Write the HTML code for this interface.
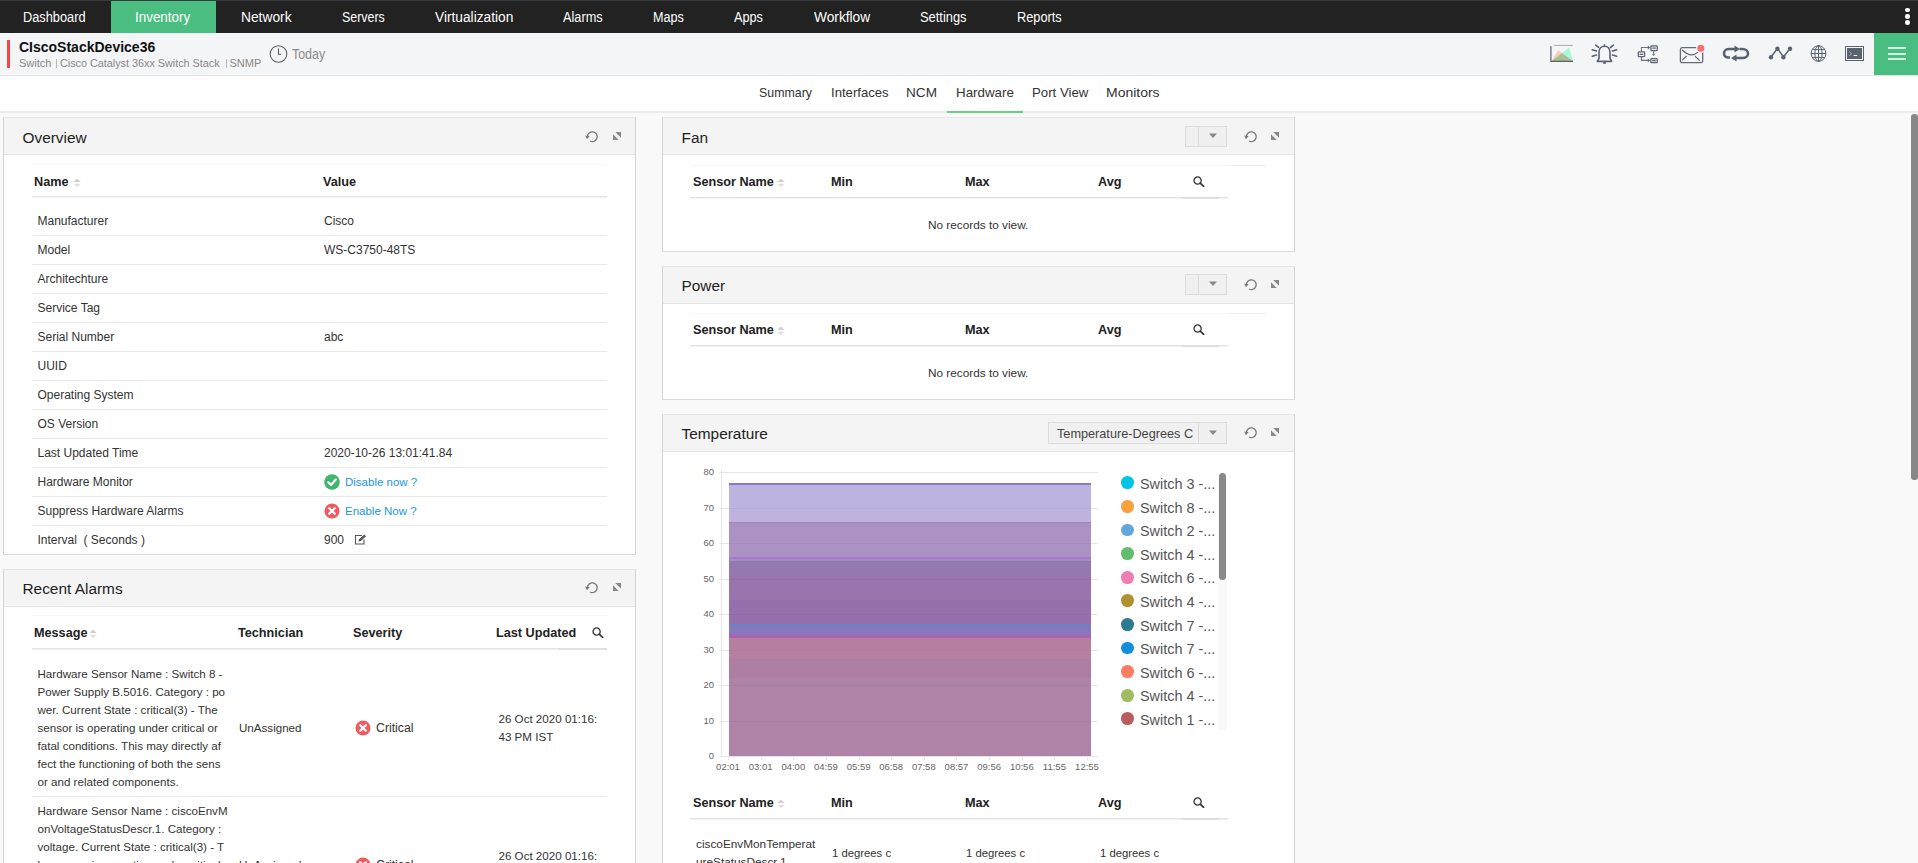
<!DOCTYPE html>
<html><head><meta charset="utf-8">
<style>
html,body{margin:0;padding:0}
body{width:1918px;height:863px;overflow:hidden;position:relative;background:#f9f9f9;font-family:"Liberation Sans",sans-serif;color:#333}
.a{position:absolute;white-space:nowrap}
.nav{position:absolute;left:0;top:0;width:1918px;height:33px;background:#222}
.nt{position:absolute;top:9px;font-size:14px;line-height:17px;color:#fff;white-space:nowrap;transform-origin:0 0}
.sub{position:absolute;left:0;top:33px;width:1918px;height:42px;background:#f4f5f7;border-bottom:1px solid #e2e3e5}
.tabs{position:absolute;left:0;top:76px;width:1918px;height:35px;background:#fff;border-bottom:2px solid #ececec}
.tt{position:absolute;top:85px;font-size:13.6px;line-height:16px;color:#333;white-space:nowrap;transform-origin:0 0}
.panel{position:absolute;background:#fff;border:1px solid #d4d4d4;border-top-color:#e6e6e6;border-bottom-color:#dcdcdc;box-sizing:border-box}
.ph{position:absolute;left:0;top:0;right:0;height:37px;background:#f4f4f4;border-bottom:1px solid #e4e4e4}
.ptitle{position:absolute;font-size:15.4px;line-height:17px;color:#1e1e1e;white-space:nowrap}
.th{position:absolute;font-size:13.4px;font-weight:bold;line-height:15px;color:#222;white-space:nowrap;transform:scaleX(0.945);transform-origin:0 0}
.td{position:absolute;font-size:12px;line-height:14px;color:#333}
.hl{position:absolute;height:1px;background:#ebebeb}
.fl{position:absolute;height:1px;background:#f6f6f6}
</style></head><body>
<!-- top nav -->
<div class="nav"></div>
<div class="a" style="left:0;top:0;width:1918px;height:1px;background:#393a3e"></div>
<div class="a" style="left:111px;top:1px;width:105px;height:32px;background:#4abd80"></div>
<div class="nt" style="left:23.25px;transform:scaleX(0.9136)">Dashboard</div>
<div class="nt" style="left:135.04px;transform:scaleX(0.9579)">Inventory</div>
<div class="nt" style="left:240.51px;transform:scaleX(0.9843)">Network</div>
<div class="nt" style="left:342.00px;transform:scaleX(0.8875)">Servers</div>
<div class="nt" style="left:435.00px;transform:scaleX(0.9798)">Virtualization</div>
<div class="nt" style="left:563.00px;transform:scaleX(0.9091)">Alarms</div>
<div class="nt" style="left:653.25px;transform:scaleX(0.9005)">Maps</div>
<div class="nt" style="left:733.87px;transform:scaleX(0.9062)">Apps</div>
<div class="nt" style="left:813.79px;transform:scaleX(0.9793)">Workflow</div>
<div class="nt" style="left:919.95px;transform:scaleX(0.9201)">Settings</div>
<div class="nt" style="left:1016.95px;transform:scaleX(0.9130)">Reports</div>
<!-- /nav -->

<!-- sub header -->
<div class="sub"></div>
<div class="a" style="left:7px;top:40px;width:3px;height:28px;background:#f4464b"></div>
<div class="a" style="left:19px;top:39px;font-size:14px;font-weight:bold;line-height:17px;color:#111">CIscoStackDevice36</div>
<div class="a" style="left:19px;top:57px;font-size:11px;line-height:12px;color:#888">Switch</div>
<div class="a" style="left:55.5px;top:58.5px;width:1px;height:9.5px;background:#b5b8c0"></div>
<div class="a" style="left:60px;top:57px;font-size:10.8px;line-height:12px;color:#888">Cisco Catalyst 36xx Switch Stack</div>
<div class="a" style="left:225.5px;top:58.5px;width:1px;height:9.5px;background:#b5b8c0"></div>
<div class="a" style="left:229.5px;top:57px;font-size:11px;line-height:12px;color:#888">SNMP</div>
<svg class="a" style="left:268px;top:44px" width="21" height="21" viewBox="0 0 21 21"><circle cx="10.5" cy="10" r="8.3" fill="none" stroke="#5c5c5c" stroke-width="1.05"/><path d="M10.5 4.6v5.6h2.6" fill="none" stroke="#555" stroke-width="1.05"/></svg>
<div class="a" style="left:292px;top:47px;font-size:13.8px;line-height:15px;color:#8a8a8a;transform:scaleX(0.9);transform-origin:0 0">Today</div>
<!-- icons -->
<svg class="a" style="left:1548px;top:43px" width="28" height="21" viewBox="0 0 28 21">
<path d="M6 2.4H25" stroke="#a0a4aa" stroke-width="0.9"/>
<path d="M3.7 18L10.3 7.2L25 18Z" fill="#ffc8b0"/>
<path d="M3.7 18L21.2 4.5L25 18Z" fill="#aaf6d8"/>
<path d="M3.7 18L14.1 10.3L25 18Z" fill="#a9bf92"/>
<path d="M2.9 3.3V18.4H25" fill="none" stroke="#5a6270" stroke-width="1.2"/>
</svg>
<svg class="a" style="left:1590px;top:43px" width="29" height="22" viewBox="0 0 29 22">
<path d="M9 15.4V9.2C9 5.6 11.4 3.2 14.5 3.2C17.6 3.2 20 5.6 20 9.2V15.4L21.7 18.4H7.3Z" fill="none" stroke="#5a6270" stroke-width="1.6" stroke-linejoin="round"/>
<path d="M14.5 1.3V3.5" stroke="#5a6270" stroke-width="1.5"/>
<path d="M13.2 19.1h2.7v1.7h-2.7z" fill="#5a6270"/>
<path d="M5.7 2.2L8.6 4.3M23.4 2.2L20.5 4.5M2.3 6.8L6.5 8M26.7 6.8L22.5 8M2.3 13.3L6.5 12M26.7 13.3L22.5 12" stroke="#5a6270" stroke-width="1.6" stroke-linecap="round"/>
</svg>
<svg class="a" style="left:1636px;top:44px" width="24" height="20" viewBox="0 0 24 20">
<g fill="none" stroke="#5a6270" stroke-width="1.25">
<rect x="14.9" y="1.9" width="6.3" height="4.6" rx="0.6"/><rect x="2.3" y="7.9" width="6.3" height="4.7" rx="0.6"/><rect x="14.9" y="14.5" width="6.3" height="4.2" rx="0.6"/>
<path d="M16.3 4.2H19.8M3.7 10.3H7.2M16.3 16.6H19.8"/>
<path d="M5.4 7.8V3.5H12.2M5.4 12.7V16.4H12.2M17.6 7.2V10.6" stroke="#6a7280" stroke-width="1.1"/>
</g>
<path d="M11.8 1.6L14.2 3.5L11.8 5.4ZM11.8 14.5L14.2 16.4L11.8 18.3ZM16 10.2H19.2L17.6 12Z" fill="#5a6270"/>
</svg>
<svg class="a" style="left:1678px;top:44px" width="30" height="21" viewBox="0 0 30 21">
<rect x="2.4" y="3.7" width="22.3" height="15" rx="1.8" fill="none" stroke="#646c78" stroke-width="1.3"/>
<path d="M4 5.8Q13.2 14.8 19.9 8.1M4 16.4L8.6 12M17 12.2L21.8 16.6" fill="none" stroke="#646c78" stroke-width="1.2"/>
<circle cx="22.8" cy="4.3" r="4.8" fill="#f4f5f7"/><circle cx="22.8" cy="4.3" r="3.5" fill="#f47272"/>
</svg>
<svg class="a" style="left:1721px;top:44px" width="30" height="18" viewBox="0 0 30 18">
<path d="M9 13.5H7.5C4.5 13.5 3 11.5 3 9.5S4.5 5 7.5 5H15M18.5 5H21.5C24.5 5 27 7 27 9.5S24.5 14 21.5 14H14" fill="none" stroke="#5a6270" stroke-width="2.6"/>
<path d="M13.5 1.5L19 5L13.5 8.5Z M15.5 10.5L10 14L15.5 17.5Z" fill="#5a6270"/>
</svg>
<svg class="a" style="left:1767px;top:44px" width="27" height="18" viewBox="0 0 27 18">
<path d="M4 13L10.5 4.5L16.5 13L23 4.5" fill="none" stroke="#5a6270" stroke-width="1.5"/>
<circle cx="4" cy="13.2" r="2.2" fill="#5a6270"/><circle cx="10.4" cy="4.7" r="2.2" fill="#5a6270"/><circle cx="16.4" cy="13.2" r="2.2" fill="#5a6270"/><circle cx="23" cy="4.7" r="2.2" fill="#5a6270"/>
</svg>
<svg class="a" style="left:1809px;top:44px" width="19" height="19" viewBox="0 0 19 19">
<g fill="none" stroke="#5a6270" stroke-width="1">
<ellipse cx="9.5" cy="9.5" rx="7.4" ry="7.8"/><ellipse cx="9.5" cy="9.5" rx="3.6" ry="7.8"/><path d="M9.5 1.7V17.3M2.1 9.5H16.9M3.2 5.6H15.8M3.2 13.4H15.8"/>
</g></svg>
<svg class="a" style="left:1844px;top:45px" width="22" height="17" viewBox="0 0 22 17">
<rect x="1.5" y="1.5" width="18" height="14" fill="none" stroke="#5a6270" stroke-width="1"/>
<rect x="3" y="3" width="15" height="11" fill="#5a6270"/>
<path d="M5.3 6.8L7.6 8.8L5.3 10.8" fill="none" stroke="#aab0ba" stroke-width="1"/><path d="M9.6 10.5H13.2" stroke="#e8eaee" stroke-width="1"/>
</svg>
<div class="a" style="left:1874px;top:33px;width:44px;height:42px;background:#4abd80"></div>
<div class="a" style="left:1888px;top:47px;width:18px;height:2px;background:#d7f1e1"></div>
<div class="a" style="left:1888px;top:53px;width:18px;height:2px;background:#d7f1e1"></div>
<div class="a" style="left:1888px;top:58px;width:18px;height:2px;background:#d7f1e1"></div>
<div class="a" style="left:1905px;top:7.8px;width:4.6px;height:4.6px;border-radius:50%;background:#fff"></div>
<div class="a" style="left:1905px;top:14px;width:4.6px;height:4.6px;border-radius:50%;background:#fff"></div>
<div class="a" style="left:1905px;top:20.2px;width:4.6px;height:4.6px;border-radius:50%;background:#fff"></div>
<div class="tabs"></div>
<div class="tt" style="left:758.83px;transform:scaleX(0.9105)">Summary</div>
<div class="tt" style="left:830.51px;transform:scaleX(0.9662)">Interfaces</div>
<div class="tt" style="left:906.49px;transform:scaleX(1.0003)">NCM</div>
<div class="tt" style="left:955.50px;transform:scaleX(0.9828)">Hardware</div>
<div class="tt" style="left:1031.81px;transform:scaleX(0.9726)">Port View</div>
<div class="tt" style="left:1105.88px;transform:scaleX(1.0275)">Monitors</div>
<!-- /tabs -->
<div class="a" style="left:947px;top:111px;width:76px;height:2px;background:#68d080"></div>

<!-- panels -->
<div class="panel" style="left:3px;top:117px;width:633px;height:438px"><div class="ph" style="height:36px"></div></div>
<div class="ptitle" style="left:22.5px;top:129px">Overview</div>
<svg class="a" style="left:584.5px;top:128.6px" width="14" height="14" viewBox="0 0 14 14"><path d="M2.4 7.6A4.9 4.9 0 1 1 5 12" fill="none" stroke="#777" stroke-width="1.25"/><path d="M0.2 6.6L4.6 6.9L2 10.2Z" fill="#777"/></svg>
<svg class="a" style="left:613px;top:132px" width="8" height="8" viewBox="0 0 8 8"><path d="M2.3 0H8V5.7Z" fill="#878787"/><path d="M0 2.3V8H5.7Z" fill="#878787"/></svg>
<div class="a" style="left:32px;top:164px;width:575px;height:1px;background:#f7f7f7"></div>
<div class="th" style="left:34px;top:174px">Name</div>
<svg class="a" style="left:73px;top:177.5px" width="8" height="10" viewBox="0 0 8 10"><path d="M0.5 4H7.5L4 0.5Z" fill="#cfcfcf"/><path d="M0.5 5.8H7.5L4 9.3Z" fill="#e0e0e0"/></svg>
<div class="th" style="left:323px;top:174px">Value</div>
<div class="a" style="left:32px;top:196px;width:575px;height:1px;background:#e4e4e4"></div>
<div class="a" style="left:32px;top:197px;width:575px;height:1px;background:#f2f2f2"></div>
<div class="td" style="left:37.5px;top:214px;font-size:12px;color:#333;">Manufacturer</div>
<div class="td" style="left:324px;top:214px;font-size:12px;color:#333;">Cisco</div>
<div class="a" style="left:32px;top:235px;width:575px;height:1px;background:#e9e9e9"></div>
<div class="td" style="left:37.5px;top:243px;font-size:12px;color:#333;">Model</div>
<div class="td" style="left:324px;top:243px;font-size:12px;color:#333;">WS-C3750-48TS</div>
<div class="a" style="left:32px;top:264px;width:575px;height:1px;background:#e9e9e9"></div>
<div class="td" style="left:37.5px;top:272px;font-size:12px;color:#333;">Architechture</div>
<div class="a" style="left:32px;top:293px;width:575px;height:1px;background:#e9e9e9"></div>
<div class="td" style="left:37.5px;top:301px;font-size:12px;color:#333;">Service Tag</div>
<div class="a" style="left:32px;top:322px;width:575px;height:1px;background:#e9e9e9"></div>
<div class="td" style="left:37.5px;top:330px;font-size:12px;color:#333;">Serial Number</div>
<div class="td" style="left:324px;top:330px;font-size:12px;color:#333;">abc</div>
<div class="a" style="left:32px;top:351px;width:575px;height:1px;background:#e9e9e9"></div>
<div class="td" style="left:37.5px;top:359px;font-size:12px;color:#333;">UUID</div>
<div class="a" style="left:32px;top:380px;width:575px;height:1px;background:#e9e9e9"></div>
<div class="td" style="left:37.5px;top:388px;font-size:12px;color:#333;">Operating System</div>
<div class="a" style="left:32px;top:409px;width:575px;height:1px;background:#e9e9e9"></div>
<div class="td" style="left:37.5px;top:417px;font-size:12px;color:#333;">OS Version</div>
<div class="a" style="left:32px;top:438px;width:575px;height:1px;background:#e9e9e9"></div>
<div class="td" style="left:37.5px;top:446px;font-size:12px;color:#333;">Last Updated Time</div>
<div class="td" style="left:324px;top:446px;font-size:12px;color:#333;">2020-10-26 13:01:41.84</div>
<div class="a" style="left:32px;top:467px;width:575px;height:1px;background:#e9e9e9"></div>
<div class="td" style="left:37.5px;top:475px;font-size:12px;color:#333;">Hardware Monitor</div>
<svg class="a" style="left:324px;top:473.5px" width="16" height="16" viewBox="0 0 16 16"><circle cx="8" cy="8" r="7.8" fill="#3fb56e"/><path d="M4.3 8.2L7 10.9L11.8 5.6" fill="none" stroke="#fff" stroke-width="2.2" stroke-linecap="round" stroke-linejoin="round"/></svg>
<div class="td" style="left:345px;top:475px;font-size:11.5px;color:#2196e0;">Disable now ?</div>
<div class="a" style="left:32px;top:496px;width:575px;height:1px;background:#e9e9e9"></div>
<div class="td" style="left:37.5px;top:504px;font-size:12px;color:#333;">Suppress Hardware Alarms</div>
<svg class="a" style="left:324px;top:502.5px" width="16" height="16" viewBox="0 0 16 16"><circle cx="8" cy="8" r="7.5" fill="#f05a5f"/><path d="M5.2 5.2L10.8 10.8M10.8 5.2L5.2 10.8" stroke="#fff" stroke-width="2.2" stroke-linecap="round"/></svg>
<div class="td" style="left:345px;top:504px;font-size:11.5px;color:#2196e0;">Enable Now ?</div>
<div class="a" style="left:32px;top:525px;width:575px;height:1px;background:#e9e9e9"></div>
<div class="td" style="left:37.5px;top:533px;font-size:12px;color:#333;">Interval&nbsp;&nbsp;( Seconds )</div>
<div class="td" style="left:324px;top:533px;font-size:12px;color:#333;">900</div>
<svg class="a" style="left:354px;top:534px" width="13" height="11" viewBox="0 0 13 11"><path d="M8 1.5H1.5V10H10V5.5" fill="none" stroke="#555" stroke-width="1.1"/><path d="M4.5 7.5L5 5.2L10.3 0.6L12 2.3L6.8 7Z" fill="#555"/></svg>
<div class="panel" style="left:3px;top:569px;width:633px;height:400px"><div class="ph" style="height:36px"></div></div>
<div class="ptitle" style="left:22.5px;top:579.5px">Recent Alarms</div>
<svg class="a" style="left:584.5px;top:580px" width="14" height="14" viewBox="0 0 14 14"><path d="M2.4 7.6A4.9 4.9 0 1 1 5 12" fill="none" stroke="#777" stroke-width="1.25"/><path d="M0.2 6.6L4.6 6.9L2 10.2Z" fill="#777"/></svg>
<svg class="a" style="left:613px;top:583px" width="8" height="8" viewBox="0 0 8 8"><path d="M2.3 0H8V5.7Z" fill="#878787"/><path d="M0 2.3V8H5.7Z" fill="#878787"/></svg>
<div class="a" style="left:32px;top:615px;width:575px;height:1px;background:#f7f7f7"></div>
<div class="th" style="left:33.5px;top:625px">Message</div>
<svg class="a" style="left:89px;top:628.5px" width="8" height="10" viewBox="0 0 8 10"><path d="M0.5 4H7.5L4 0.5Z" fill="#cfcfcf"/><path d="M0.5 5.8H7.5L4 9.3Z" fill="#e0e0e0"/></svg>
<div class="th" style="left:237.5px;top:625px">Technician</div>
<div class="th" style="left:352.5px;top:625px">Severity</div>
<div class="th" style="left:495.5px;top:625px">Last Updated</div>
<svg class="a" style="left:592px;top:627px" width="12" height="11" viewBox="0 0 12 11"><circle cx="4.6" cy="4.5" r="3.6" fill="none" stroke="#333" stroke-width="1.3"/><path d="M7.3 7.2L10.6 10.3" stroke="#333" stroke-width="1.7" stroke-linecap="round"/></svg>
<div class="a" style="left:32px;top:648px;width:575px;height:1px;background:#e4e4e4"></div>
<div class="a" style="left:32px;top:649px;width:575px;height:1px;background:#f2f2f2"></div>
<div class="a" style="left:558px;top:648px;width:49px;height:2px;background:#e0e0e0"></div>
<div class="td" style="left:37.5px;top:667px;font-size:11.6px;color:#333;">Hardware Sensor Name : Switch 8 -</div>
<div class="td" style="left:37.5px;top:685px;font-size:11.6px;color:#333;">Power Supply B.5016. Category : po</div>
<div class="td" style="left:37.5px;top:703px;font-size:11.6px;color:#333;">wer. Current State : critical(3) - The</div>
<div class="td" style="left:37.5px;top:721px;font-size:11.6px;color:#333;">sensor is operating under critical or</div>
<div class="td" style="left:37.5px;top:739px;font-size:11.6px;color:#333;">fatal conditions. This may directly af</div>
<div class="td" style="left:37.5px;top:757px;font-size:11.6px;color:#333;">fect the functioning of both the sens</div>
<div class="td" style="left:37.5px;top:775px;font-size:11.6px;color:#333;">or and related components.</div>
<div class="td" style="left:239px;top:721px;font-size:11.6px;color:#333;">UnAssigned</div>
<svg class="a" style="left:355px;top:720px" width="16" height="16" viewBox="0 0 16 16"><circle cx="8" cy="8" r="7.5" fill="#f05a5f"/><path d="M5.2 5.2L10.8 10.8M10.8 5.2L5.2 10.8" stroke="#fff" stroke-width="2.2" stroke-linecap="round"/></svg>
<div class="td" style="left:376px;top:721px;font-size:12.3px;color:#333;">Critical</div>
<div class="td" style="left:498.5px;top:712px;font-size:11.6px;color:#333;">26 Oct 2020 01:16:</div>
<div class="td" style="left:498.5px;top:730px;font-size:11.6px;color:#333;">43 PM IST</div>
<div class="a" style="left:32px;top:796px;width:575px;height:1px;background:#e9e9e9"></div>
<div class="td" style="left:37.5px;top:804px;font-size:11.6px;color:#333;">Hardware Sensor Name : ciscoEnvM</div>
<div class="td" style="left:37.5px;top:822px;font-size:11.6px;color:#333;">onVoltageStatusDescr.1. Category :</div>
<div class="td" style="left:37.5px;top:840px;font-size:11.6px;color:#333;">voltage. Current State : critical(3) - T</div>
<div class="td" style="left:37.5px;top:858px;font-size:11.6px;color:#333;">he sensor is operating under critical o</div>
<div class="td" style="left:239px;top:858px;font-size:11.6px;color:#333;">UnAssigned</div>
<svg class="a" style="left:355px;top:857px" width="16" height="16" viewBox="0 0 16 16"><circle cx="8" cy="8" r="7.5" fill="#f05a5f"/><path d="M5.2 5.2L10.8 10.8M10.8 5.2L5.2 10.8" stroke="#fff" stroke-width="2.2" stroke-linecap="round"/></svg>
<div class="td" style="left:376px;top:858px;font-size:12.3px;color:#333;">Critical</div>
<div class="td" style="left:498.5px;top:849px;font-size:11.6px;color:#333;">26 Oct 2020 01:16:</div>
<div class="panel" style="left:662px;top:117px;width:633px;height:135px"><div class="ph" style="height:36px"></div></div>
<div class="ptitle" style="left:681.5px;top:129px">Fan</div>
<div class="a" style="left:1185px;top:126px;width:42px;height:21px;box-sizing:border-box;border:1px solid #dcdcdc;background:#f0f0f0"></div>
<div class="a" style="left:1198px;top:127px;width:1px;height:19px;background:#dcdcdc"></div>
<svg class="a" style="left:1208px;top:133px" width="10" height="6" viewBox="0 0 10 6"><path d="M1 0.5H9L5 5Z" fill="#888"/></svg>
<svg class="a" style="left:1243.5px;top:128.5px" width="14" height="14" viewBox="0 0 14 14"><path d="M2.4 7.6A4.9 4.9 0 1 1 5 12" fill="none" stroke="#777" stroke-width="1.25"/><path d="M0.2 6.6L4.6 6.9L2 10.2Z" fill="#777"/></svg>
<svg class="a" style="left:1271px;top:132px" width="8" height="8" viewBox="0 0 8 8"><path d="M2.3 0H8V5.7Z" fill="#878787"/><path d="M0 2.3V8H5.7Z" fill="#878787"/></svg>
<div class="a" style="left:690px;top:165px;width:538px;height:1px;background:#f7f7f7"></div>
<div class="a" style="left:1228px;top:165px;width:38px;height:1px;background:#ededed"></div>
<div class="th" style="left:692.5px;top:174px">Sensor Name</div>
<svg class="a" style="left:777px;top:177.5px" width="8" height="10" viewBox="0 0 8 10"><path d="M0.5 4H7.5L4 0.5Z" fill="#cfcfcf"/><path d="M0.5 5.8H7.5L4 9.3Z" fill="#e0e0e0"/></svg>
<div class="th" style="left:830.5px;top:174px">Min</div>
<div class="th" style="left:964.5px;top:174px">Max</div>
<div class="th" style="left:1098px;top:174px">Avg</div>
<svg class="a" style="left:1193px;top:176px" width="12" height="11" viewBox="0 0 12 11"><circle cx="4.6" cy="4.5" r="3.6" fill="none" stroke="#333" stroke-width="1.3"/><path d="M7.3 7.2L10.6 10.3" stroke="#333" stroke-width="1.7" stroke-linecap="round"/></svg>
<div class="a" style="left:690px;top:197px;width:538px;height:1px;background:#e4e4e4"></div>
<div class="a" style="left:690px;top:198px;width:538px;height:1px;background:#f2f2f2"></div>
<div class="a" style="left:1182px;top:197px;width:37px;height:2px;background:#dedede"></div>
<div class="td" style="left:928px;top:218px;font-size:11.8px;color:#333;">No records to view.</div>
<div class="panel" style="left:662px;top:266px;width:633px;height:134px"><div class="ph" style="height:36px"></div></div>
<div class="ptitle" style="left:681.5px;top:277px">Power</div>
<div class="a" style="left:1185px;top:274px;width:42px;height:21px;box-sizing:border-box;border:1px solid #dcdcdc;background:#f0f0f0"></div>
<div class="a" style="left:1198px;top:275px;width:1px;height:19px;background:#dcdcdc"></div>
<svg class="a" style="left:1208px;top:281px" width="10" height="6" viewBox="0 0 10 6"><path d="M1 0.5H9L5 5Z" fill="#888"/></svg>
<svg class="a" style="left:1243.5px;top:276.5px" width="14" height="14" viewBox="0 0 14 14"><path d="M2.4 7.6A4.9 4.9 0 1 1 5 12" fill="none" stroke="#777" stroke-width="1.25"/><path d="M0.2 6.6L4.6 6.9L2 10.2Z" fill="#777"/></svg>
<svg class="a" style="left:1271px;top:280px" width="8" height="8" viewBox="0 0 8 8"><path d="M2.3 0H8V5.7Z" fill="#878787"/><path d="M0 2.3V8H5.7Z" fill="#878787"/></svg>
<div class="a" style="left:690px;top:313px;width:538px;height:1px;background:#f7f7f7"></div>
<div class="a" style="left:1228px;top:313px;width:38px;height:1px;background:#ededed"></div>
<div class="th" style="left:692.5px;top:322px">Sensor Name</div>
<svg class="a" style="left:777px;top:325.5px" width="8" height="10" viewBox="0 0 8 10"><path d="M0.5 4H7.5L4 0.5Z" fill="#cfcfcf"/><path d="M0.5 5.8H7.5L4 9.3Z" fill="#e0e0e0"/></svg>
<div class="th" style="left:830.5px;top:322px">Min</div>
<div class="th" style="left:964.5px;top:322px">Max</div>
<div class="th" style="left:1098px;top:322px">Avg</div>
<svg class="a" style="left:1193px;top:324px" width="12" height="11" viewBox="0 0 12 11"><circle cx="4.6" cy="4.5" r="3.6" fill="none" stroke="#333" stroke-width="1.3"/><path d="M7.3 7.2L10.6 10.3" stroke="#333" stroke-width="1.7" stroke-linecap="round"/></svg>
<div class="a" style="left:690px;top:345px;width:538px;height:1px;background:#e4e4e4"></div>
<div class="a" style="left:690px;top:346px;width:538px;height:1px;background:#f2f2f2"></div>
<div class="a" style="left:1182px;top:345px;width:37px;height:2px;background:#dedede"></div>
<div class="td" style="left:928px;top:366px;font-size:11.8px;color:#333;">No records to view.</div>
<div class="panel" style="left:662px;top:414px;width:633px;height:500px"><div class="ph" style="height:36px"></div></div>
<div class="ptitle" style="left:681.5px;top:425px">Temperature</div>
<div class="a" style="left:1048px;top:422px;width:179px;height:22px;box-sizing:border-box;border:1px solid #dcdcdc;background:#f0f0f0"></div>
<div class="a" style="left:1198px;top:423px;width:1px;height:20px;background:#dcdcdc"></div>
<svg class="a" style="left:1208px;top:430px" width="10" height="6" viewBox="0 0 10 6"><path d="M1 0.5H9L5 5Z" fill="#888"/></svg>
<div class="a" style="left:1057px;top:427px;font-size:12.7px;line-height:14px;color:#444">Temperature-Degrees C</div>
<svg class="a" style="left:1243.5px;top:424.6px" width="14" height="14" viewBox="0 0 14 14"><path d="M2.4 7.6A4.9 4.9 0 1 1 5 12" fill="none" stroke="#777" stroke-width="1.25"/><path d="M0.2 6.6L4.6 6.9L2 10.2Z" fill="#777"/></svg>
<svg class="a" style="left:1271px;top:428px" width="8" height="8" viewBox="0 0 8 8"><path d="M2.3 0H8V5.7Z" fill="#878787"/><path d="M0 2.3V8H5.7Z" fill="#878787"/></svg>
<!-- chart -->
<svg class="a" style="left:690px;top:460px" width="550" height="320" viewBox="690 460 550 320" shape-rendering="crispEdges">
<path d="M719 721.5H1098" stroke="#e6e6e6" stroke-width="1"/>
<path d="M719 685.5H1098" stroke="#e6e6e6" stroke-width="1"/>
<path d="M719 650.5H1098" stroke="#e6e6e6" stroke-width="1"/>
<path d="M719 614.5H1098" stroke="#e6e6e6" stroke-width="1"/>
<path d="M719 579.5H1098" stroke="#e6e6e6" stroke-width="1"/>
<path d="M719 543.5H1098" stroke="#e6e6e6" stroke-width="1"/>
<path d="M719 508.5H1098" stroke="#e6e6e6" stroke-width="1"/>
<path d="M719 472.5H1098" stroke="#e6e6e6" stroke-width="1"/>
<path d="M721.5 470V757M719 756.5H1098" stroke="#e6e6e6" stroke-width="1"/>
<rect x="728.5" y="482.5" width="362.5" height="39.0" fill="#beb2de"/>
<rect x="728.5" y="521.5" width="362.5" height="35.5" fill="#ab91c4"/>
<rect x="728.5" y="557" width="362.5" height="5" fill="#a48cc0"/>
<rect x="728.5" y="562" width="362.5" height="12.5" fill="#9479b1"/>
<rect x="728.5" y="574.5" width="362.5" height="25.5" fill="#9a74af"/>
<rect x="728.5" y="600" width="362.5" height="24" fill="#9670ad"/>
<rect x="728.5" y="624" width="362.5" height="11" fill="#8578bd"/>
<rect x="728.5" y="635" width="362.5" height="4" fill="#b77f9f"/>
<rect x="728.5" y="639" width="362.5" height="20" fill="#b77f9f"/>
<rect x="728.5" y="659" width="362.5" height="18.5" fill="#ad7ea1"/>
<rect x="728.5" y="677.5" width="362.5" height="78.5" fill="#ae83a7"/>
<rect x="728.5" y="482.5" width="362.5" height="2" fill="#8d76c8"/>
<rect x="728.5" y="521.5" width="362.5" height="1.5" fill="#a085bd"/>
<rect x="728.5" y="557" width="362.5" height="2" fill="#a47acc"/>
<rect x="728.5" y="560.5" width="362.5" height="1.3" fill="#8a78b0"/>
<rect x="728.5" y="624" width="362.5" height="2" fill="#6e80c8"/>
<rect x="728.5" y="634.5" width="362.5" height="3" fill="#b25fae"/>
<path d="M728.5 721.5H1091" stroke="#000" stroke-opacity="0.03" stroke-width="1"/>
<path d="M728.5 685.5H1091" stroke="#000" stroke-opacity="0.03" stroke-width="1"/>
<path d="M728.5 650.5H1091" stroke="#000" stroke-opacity="0.03" stroke-width="1"/>
<path d="M728.5 614.5H1091" stroke="#000" stroke-opacity="0.03" stroke-width="1"/>
<path d="M728.5 579.5H1091" stroke="#000" stroke-opacity="0.03" stroke-width="1"/>
<path d="M728.5 543.5H1091" stroke="#000" stroke-opacity="0.03" stroke-width="1"/>
<path d="M728.5 508.5H1091" stroke="#000" stroke-opacity="0.03" stroke-width="1"/>
<path d="M728.5 756V760" stroke="#e6e6e6" stroke-width="1"/>
<path d="M761.5 756V760" stroke="#e6e6e6" stroke-width="1"/>
<path d="M793.5 756V760" stroke="#e6e6e6" stroke-width="1"/>
<path d="M826.5 756V760" stroke="#e6e6e6" stroke-width="1"/>
<path d="M859.5 756V760" stroke="#e6e6e6" stroke-width="1"/>
<path d="M891.5 756V760" stroke="#e6e6e6" stroke-width="1"/>
<path d="M924.5 756V760" stroke="#e6e6e6" stroke-width="1"/>
<path d="M956.5 756V760" stroke="#e6e6e6" stroke-width="1"/>
<path d="M989.5 756V760" stroke="#e6e6e6" stroke-width="1"/>
<path d="M1022.5 756V760" stroke="#e6e6e6" stroke-width="1"/>
<path d="M1054.5 756V760" stroke="#e6e6e6" stroke-width="1"/>
<path d="M1087.5 756V760" stroke="#e6e6e6" stroke-width="1"/>
</svg>
<div class="a" style="left:684px;top:750.0px;width:30px;text-align:right;font-size:9.5px;line-height:12px;color:#666">0</div>
<div class="a" style="left:684px;top:714.5px;width:30px;text-align:right;font-size:9.5px;line-height:12px;color:#666">10</div>
<div class="a" style="left:684px;top:679.1px;width:30px;text-align:right;font-size:9.5px;line-height:12px;color:#666">20</div>
<div class="a" style="left:684px;top:643.6px;width:30px;text-align:right;font-size:9.5px;line-height:12px;color:#666">30</div>
<div class="a" style="left:684px;top:608.2px;width:30px;text-align:right;font-size:9.5px;line-height:12px;color:#666">40</div>
<div class="a" style="left:684px;top:572.8px;width:30px;text-align:right;font-size:9.5px;line-height:12px;color:#666">50</div>
<div class="a" style="left:684px;top:537.3px;width:30px;text-align:right;font-size:9.5px;line-height:12px;color:#666">60</div>
<div class="a" style="left:684px;top:501.8px;width:30px;text-align:right;font-size:9.5px;line-height:12px;color:#666">70</div>
<div class="a" style="left:684px;top:466.4px;width:30px;text-align:right;font-size:9.5px;line-height:12px;color:#666">80</div>
<div class="a" style="left:708.0px;top:760.5px;width:40px;text-align:center;font-size:9.5px;line-height:12px;color:#666">02:01</div>
<div class="a" style="left:740.6px;top:760.5px;width:40px;text-align:center;font-size:9.5px;line-height:12px;color:#666">03:01</div>
<div class="a" style="left:773.3px;top:760.5px;width:40px;text-align:center;font-size:9.5px;line-height:12px;color:#666">04:00</div>
<div class="a" style="left:805.9px;top:760.5px;width:40px;text-align:center;font-size:9.5px;line-height:12px;color:#666">04:59</div>
<div class="a" style="left:838.6px;top:760.5px;width:40px;text-align:center;font-size:9.5px;line-height:12px;color:#666">05:59</div>
<div class="a" style="left:871.2px;top:760.5px;width:40px;text-align:center;font-size:9.5px;line-height:12px;color:#666">06:58</div>
<div class="a" style="left:903.8px;top:760.5px;width:40px;text-align:center;font-size:9.5px;line-height:12px;color:#666">07:58</div>
<div class="a" style="left:936.5px;top:760.5px;width:40px;text-align:center;font-size:9.5px;line-height:12px;color:#666">08:57</div>
<div class="a" style="left:969.1px;top:760.5px;width:40px;text-align:center;font-size:9.5px;line-height:12px;color:#666">09:56</div>
<div class="a" style="left:1001.8px;top:760.5px;width:40px;text-align:center;font-size:9.5px;line-height:12px;color:#666">10:56</div>
<div class="a" style="left:1034.4px;top:760.5px;width:40px;text-align:center;font-size:9.5px;line-height:12px;color:#666">11:55</div>
<div class="a" style="left:1067.0px;top:760.5px;width:40px;text-align:center;font-size:9.5px;line-height:12px;color:#666">12:55</div>
<div class="a" style="left:1218px;top:473px;width:9px;height:257px;background:#f9f9f9"></div>
<div class="a" style="left:1219px;top:473px;width:7px;height:107px;border-radius:4px;background:#888"></div>
<div class="a" style="left:1121px;top:476.4px;width:12.8px;height:12.8px;border-radius:50%;background:#00c5e5"></div>
<div class="a" style="left:1140px;top:475.0px;font-size:15px;line-height:17px;color:#555;transform:scaleX(0.962);transform-origin:0 0">Switch 3 -...</div>
<div class="a" style="left:1121px;top:500.0px;width:12.8px;height:12.8px;border-radius:50%;background:#f9a03e"></div>
<div class="a" style="left:1140px;top:498.6px;font-size:15px;line-height:17px;color:#555;transform:scaleX(0.962);transform-origin:0 0">Switch 8 -...</div>
<div class="a" style="left:1121px;top:523.6px;width:12.8px;height:12.8px;border-radius:50%;background:#63a6dc"></div>
<div class="a" style="left:1140px;top:522.2px;font-size:15px;line-height:17px;color:#555;transform:scaleX(0.962);transform-origin:0 0">Switch 2 -...</div>
<div class="a" style="left:1121px;top:547.2px;width:12.8px;height:12.8px;border-radius:50%;background:#62bd6d"></div>
<div class="a" style="left:1140px;top:545.8px;font-size:15px;line-height:17px;color:#555;transform:scaleX(0.962);transform-origin:0 0">Switch 4 -...</div>
<div class="a" style="left:1121px;top:570.8px;width:12.8px;height:12.8px;border-radius:50%;background:#ef7db1"></div>
<div class="a" style="left:1140px;top:569.4px;font-size:15px;line-height:17px;color:#555;transform:scaleX(0.962);transform-origin:0 0">Switch 6 -...</div>
<div class="a" style="left:1121px;top:594.4px;width:12.8px;height:12.8px;border-radius:50%;background:#b1902e"></div>
<div class="a" style="left:1140px;top:593.0px;font-size:15px;line-height:17px;color:#555;transform:scaleX(0.962);transform-origin:0 0">Switch 4 -...</div>
<div class="a" style="left:1121px;top:618.0px;width:12.8px;height:12.8px;border-radius:50%;background:#2e7a91"></div>
<div class="a" style="left:1140px;top:616.6px;font-size:15px;line-height:17px;color:#555;transform:scaleX(0.962);transform-origin:0 0">Switch 7 -...</div>
<div class="a" style="left:1121px;top:641.6px;width:12.8px;height:12.8px;border-radius:50%;background:#128fdc"></div>
<div class="a" style="left:1140px;top:640.2px;font-size:15px;line-height:17px;color:#555;transform:scaleX(0.962);transform-origin:0 0">Switch 7 -...</div>
<div class="a" style="left:1121px;top:665.2px;width:12.8px;height:12.8px;border-radius:50%;background:#fa7d62"></div>
<div class="a" style="left:1140px;top:663.8px;font-size:15px;line-height:17px;color:#555;transform:scaleX(0.962);transform-origin:0 0">Switch 6 -...</div>
<div class="a" style="left:1121px;top:688.8px;width:12.8px;height:12.8px;border-radius:50%;background:#9ebd5c"></div>
<div class="a" style="left:1140px;top:687.4px;font-size:15px;line-height:17px;color:#555;transform:scaleX(0.962);transform-origin:0 0">Switch 4 -...</div>
<div class="a" style="left:1121px;top:712.4px;width:12.8px;height:12.8px;border-radius:50%;background:#b95d5d"></div>
<div class="a" style="left:1140px;top:711.0px;font-size:15px;line-height:17px;color:#555;transform:scaleX(0.962);transform-origin:0 0">Switch 1 -...</div>
<div class="th" style="left:692.5px;top:795px">Sensor Name</div>
<div class="th" style="left:830.5px;top:795px">Min</div>
<div class="th" style="left:964.5px;top:795px">Max</div>
<div class="th" style="left:1098px;top:795px">Avg</div>
<svg class="a" style="left:777px;top:798.5px" width="8" height="10" viewBox="0 0 8 10"><path d="M0.5 4H7.5L4 0.5Z" fill="#cfcfcf"/><path d="M0.5 5.8H7.5L4 9.3Z" fill="#e0e0e0"/></svg>
<svg class="a" style="left:1193px;top:797px" width="12" height="11" viewBox="0 0 12 11"><circle cx="4.6" cy="4.5" r="3.6" fill="none" stroke="#333" stroke-width="1.3"/><path d="M7.3 7.2L10.6 10.3" stroke="#333" stroke-width="1.7" stroke-linecap="round"/></svg>
<div class="a" style="left:690px;top:818px;width:538px;height:1px;background:#e4e4e4"></div><div class="a" style="left:690px;top:819px;width:538px;height:1px;background:#f2f2f2"></div><div class="a" style="left:1182px;top:818px;width:37px;height:2px;background:#dedede"></div>
<div class="td" style="left:696px;top:837px;font-size:11.8px">ciscoEnvMonTemperat</div>
<div class="td" style="left:696px;top:855px;font-size:11.8px">ureStatusDescr.1</div>
<div class="td" style="left:832px;top:846px;font-size:11.3px">1 degrees c</div>
<div class="td" style="left:966px;top:846px;font-size:11.3px">1 degrees c</div>
<div class="td" style="left:1100px;top:846px;font-size:11.3px">1 degrees c</div>
<div class="a" style="left:1911px;top:114px;width:7px;height:366px;border-radius:3px;background:#888"></div>
</body></html>
